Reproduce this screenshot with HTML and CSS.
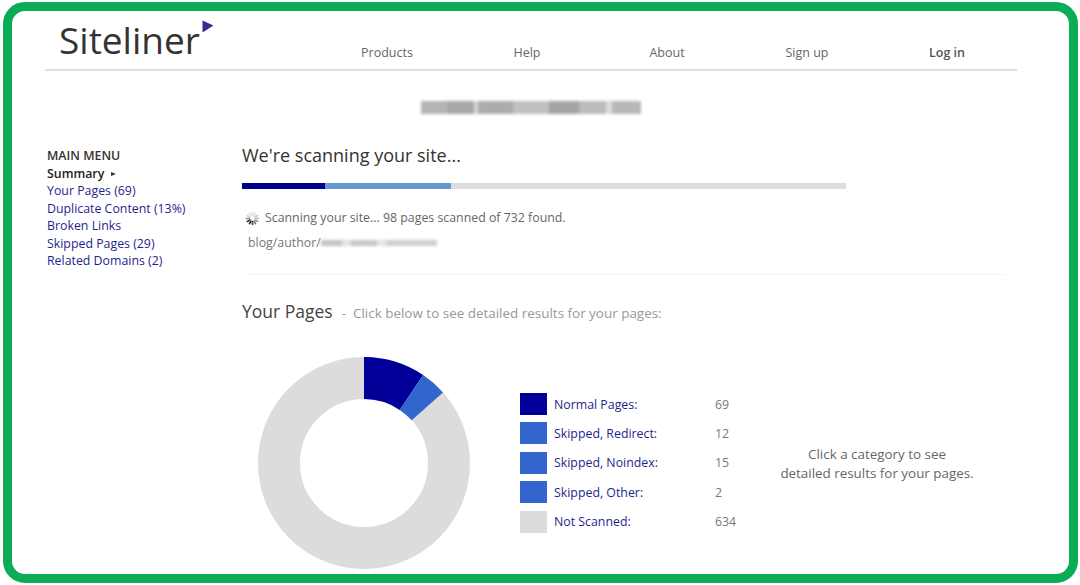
FILE: index.html
```html
<!DOCTYPE html>
<html lang="en">
<head>
<meta charset="utf-8">
<title>Siteliner</title>
<link rel="stylesheet" href="styles.css">
</head>
<body>
<div class="frame">
  <header class="header">
    <div class="logo"><span class="logo-text">Siteliner</span><svg class="logo-mark" width="12" height="13" viewBox="0 0 12 13"><path d="M0.5 0.5 L11.5 5.5 L0.5 12.5 Z" fill="#3b2a96"/></svg></div>
    <nav class="nav">
      <a class="nav-item">Products</a>
      <a class="nav-item">Help</a>
      <a class="nav-item">About</a>
      <a class="nav-item">Sign up</a>
      <a class="nav-item nav-strong">Log in</a>
    </nav>
  </header>
  <div class="domain-row"><div class="domain-blur"></div></div>
  <div class="columns">
    <aside class="sidebar">
      <div class="menu-title">MAIN MENU</div>
      <div class="menu-current">Summary <span class="menu-arrow"></span></div>
      <a class="menu-link">Your Pages (69)</a>
      <a class="menu-link">Duplicate Content (13%)</a>
      <a class="menu-link">Broken Links</a>
      <a class="menu-link">Skipped Pages (29)</a>
      <a class="menu-link">Related Domains (2)</a>
    </aside>
    <main class="main">
      <h1 class="title">We're scanning your site...</h1>
      <div class="progress"><div class="p-dark"></div><div class="p-mid"></div></div>
      <div class="status">
        <svg class="spinner" width="15" height="15" viewBox="0 0 15 15" fill="none" stroke-width="1.6" stroke-linecap="round">
          <path d="M7.5 1.5V4.5" stroke="#ddd"/>
          <path d="M10.5 2.3L9 4.9" stroke="#ddd"/>
          <path d="M12.7 4.5L10.1 6" stroke="#ccc"/>
          <path d="M13.5 7.5H10.5" stroke="#bbb"/>
          <path d="M12.7 10.5L10.1 9" stroke="#999"/>
          <path d="M10.5 12.7L9 10.1" stroke="#777"/>
          <path d="M7.5 13.5V10.5" stroke="#444"/>
          <path d="M4.5 12.7L6 10.1" stroke="#222"/>
          <path d="M2.3 10.5L4.9 9" stroke="#333"/>
          <path d="M1.5 7.5H4.5" stroke="#888"/>
          <path d="M2.3 4.5L4.9 6" stroke="#ccc"/>
          <path d="M4.5 2.3L6 4.9" stroke="#ddd"/>
        </svg>
        <span>Scanning your site... 98 pages scanned of 732 found.</span>
      </div>
      <div class="path"><span>blog/author/</span><span class="path-blur"></span></div>
      <div class="divider"></div>
      <div class="section-head"><h2 class="section-title">Your Pages</h2><span class="section-sub">-&nbsp; Click below to see detailed results for your pages:</span></div>
      <div class="chart-row">
        <svg class="donut" width="212" height="212" viewBox="0 0 212 212">
          <circle cx="106" cy="106" r="85" fill="none" stroke="#dcdcdc" stroke-width="42"/>
          <path d="M106 0 A106 106 0 0 1 165.1 18 L141.7 52.9 A64 64 0 0 0 106 42 Z" fill="#000099"/>
          <path d="M165.1 18 A106 106 0 0 1 185 35.4 L153.7 63.3 A64 64 0 0 0 141.7 52.9 Z" fill="#3366cc"/>
        </svg>
        <div class="legend">
          <div class="legend-row"><span class="swatch sw-dark"></span><a class="legend-label">Normal Pages:</a><span class="legend-value">69</span></div>
          <div class="legend-row"><span class="swatch sw-blue"></span><a class="legend-label">Skipped, Redirect:</a><span class="legend-value">12</span></div>
          <div class="legend-row"><span class="swatch sw-blue"></span><a class="legend-label">Skipped, Noindex:</a><span class="legend-value">15</span></div>
          <div class="legend-row"><span class="swatch sw-blue"></span><a class="legend-label">Skipped, Other:</a><span class="legend-value">2</span></div>
          <div class="legend-row"><span class="swatch sw-gray"></span><a class="legend-label">Not Scanned:</a><span class="legend-value">634</span></div>
        </div>
        <p class="note">Click a category to see<br>detailed results for your pages.</p>
      </div>
    </main>
  </div>
</div>
</body>
</html>
```
FILE: styles.css
```css
* { box-sizing: border-box; }
html, body { margin: 0; height: 100%; background: #fff; overflow: hidden; }
body { font-family: "Open Sans", "Noto Sans", sans-serif; color: #666; }

.frame {
  width: 1075px;
  height: 581px;
  margin: 2px 0 0 3px;
  border: 9px solid #0cab55;
  border-radius: 22px;
  background: #fff;
  overflow: hidden;
}

.header {
  display: flex;
  align-items: flex-start;
  height: 60px;
  margin: 0 52px 0 33px;
  border-bottom: 2px solid #dedede;
}
.logo { display: flex; width: 272px; padding: 6px 0 0 14px; align-items: flex-start; }
.logo-text { flex: none; font-size: 37px; line-height: 46px; color: #333; }
.logo-mark { flex: none; margin: 3px 0 0 2px; }
.nav { display: flex; }
.nav-item { width: 140px; text-align: center; font-size: 12.5px; line-height: 18px; margin-top: 33px; color: #666; }
.nav-strong { font-weight: 600; color: #555; }

.domain-row { display: flex; justify-content: center; padding: 30px 20px 0 0; height: 58px; }
.domain-blur {
  width: 220px;
  height: 13px;
  background: linear-gradient(90deg, #b4b4b4 0 12%, #a8a8a8 12% 24%, #d8d8d8 24% 26%, #ababab 26% 42%, #c0c0c0 42% 58%, #a4a4a4 58% 72%, #bcbcbc 72% 84%, #dcdcdc 84% 87%, #b8b8b8 87% 100%);
  filter: blur(1.5px);
}

.columns { display: flex; margin-top: 18px; }

.sidebar { width: 230px; padding: 0 0 0 35px; display: flex; flex-direction: column; font-size: 12.35px; line-height: 17.5px; }
.menu-title { font-weight: 600; color: #333; }
.menu-current { font-weight: 600; color: #222; }
.menu-arrow {
  display: inline-block;
  margin-left: 4px;
  vertical-align: 2px;
  border-left: 5px solid #333;
  border-top: 2.5px solid transparent;
  border-bottom: 2.5px solid transparent;
}
.menu-link { color: #1f1f8c; }

.main { flex: 1; display: flex; flex-direction: column; margin-top: -5px; }
.title { margin: 0; font-size: 18px; line-height: 26px; font-weight: 400; color: #333; }
.progress { display: flex; width: 604px; height: 6px; margin-top: 15px; background: #dedede; }
.p-dark { width: 83px; background: #00008f; }
.p-mid { width: 126px; background: #6699cc; }

.status { display: flex; align-items: center; gap: 5px; margin: 20px 0 0 3px; font-size: 12.35px; line-height: 18px; color: #666; }
.spinner { flex: none; }
.path { display: flex; align-items: center; margin: 7px 0 0 6px; font-size: 12.35px; line-height: 18px; color: #777; }
.path-blur {
  width: 116px;
  height: 6px;
  background: linear-gradient(90deg, #c4c4c4 0 18%, #e2e2e2 18% 26%, #c8c8c8 26% 48%, #e4e4e4 48% 56%, #d0d0d0 56% 100%);
  filter: blur(1.5px);
}
.divider { width: 756px; height: 1px; margin: 22px 0 0 6px; background: #f2f2f2; }

.section-head { display: flex; align-items: baseline; margin-top: 23px; }
.section-title { margin: 0; font-size: 17.5px; line-height: 26px; font-weight: 400; color: #444; }
.section-sub { margin-left: 9px; font-size: 13.45px; color: #999; white-space: nowrap; }

.chart-row { display: flex; align-items: flex-start; margin-top: 33px; }
.donut { flex: none; margin-left: 16px; display: block; }
.legend { margin: 36px 0 0 50px; width: 250px; display: flex; flex-direction: column; gap: 7.4px; }
.legend-row { display: flex; align-items: center; height: 22px; font-size: 12.35px; }
.swatch { flex: none; width: 27px; height: 22px; margin-right: 7px; }
.sw-dark { background: #000099; }
.sw-blue { background: #3366cc; }
.sw-gray { background: #dcdcdc; }
.legend-label { width: 161px; color: #1f1f8c; }
.legend-value { color: #777; }
.note { margin: 88px 0 0 7px; width: 200px; flex: none; text-align: center; font-size: 13.4px; line-height: 19px; color: #666; }
```
